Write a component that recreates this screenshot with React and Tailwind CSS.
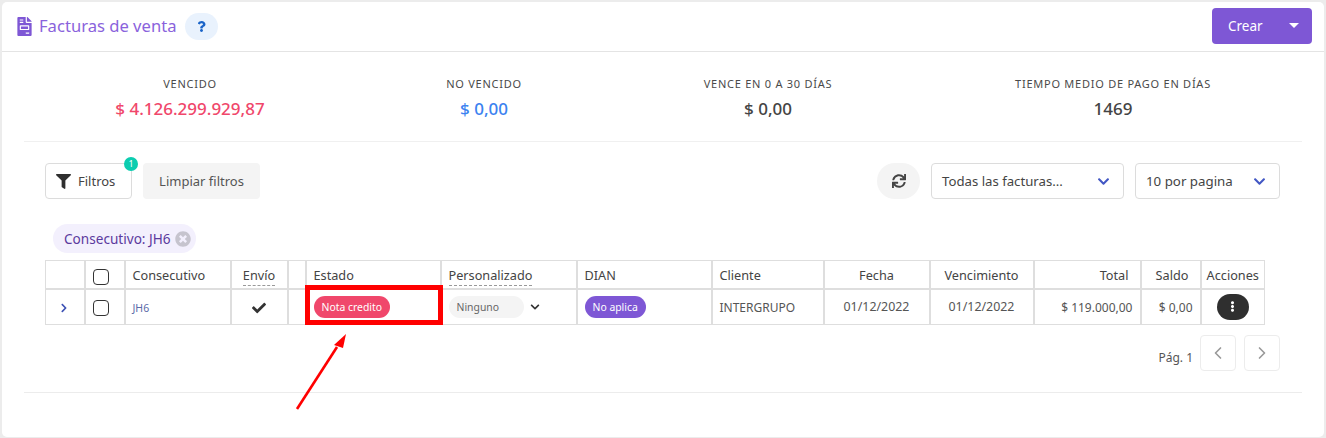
import React from 'react';
import { ChevronLeft, ChevronRight } from 'lucide-react';
import { FaCheck, FaChevronDown, FaChevronRight, FaEllipsisV, FaFileInvoice, FaFilter, FaQuestion, FaSync, FaTimesCircle } from 'react-icons/fa';

const COLS = [39, 40, 106, 57, 18, 135, 136, 135, 112, 106, 104, 107, 60, 64];

const HEADERS = [
  { label: '' },
  { label: '', check: true },
  { label: 'Consecutivo' },
  { label: 'Envío', dashed: true, align: 'text-center' },
  { label: '' },
  { label: 'Estado' },
  { label: 'Personalizado', dashed: true },
  { label: 'DIAN' },
  { label: 'Cliente' },
  { label: 'Fecha', align: 'text-center' },
  { label: 'Vencimiento', align: 'text-center' },
  { label: 'Total', align: 'text-right pr-[11px]' },
  { label: 'Saldo', align: 'text-center pl-[10px]' },
  { label: 'Acciones', align: 'text-center pl-[3px] pr-[3px]' },
];

const CELL = 'border-2 border-t border-b border-[#dedede] first:border-l last:border-r';

function Stat({ label, value, color, className }) {
  return (
    <div className={`flex flex-col items-center ${className}`}>
      <span className="text-[11px] leading-4 tracking-[0.75px] text-[#4a4a4a]">{label}</span>
      <span className={`text-[17px] leading-6 font-medium mt-[5px] ${color}`}>{value}</span>
    </div>
  );
}

function Box() {
  return <span className="block w-4 h-4 ml-[7px] mt-[3px] rounded-[4px] border border-[#333] bg-white" />;
}

export default function App() {
  return (
    <div className="w-[1326px] h-[438px] bg-[#ececec] pt-[2px] pl-[2px] pr-[2px] pb-[1px] overflow-hidden relative text-[#444] font-['Noto_Sans','Open_Sans',sans-serif]">
      <div className="h-full bg-white rounded-[5px] flex flex-col">
        {/* header */}
        <div className="h-[50px] shrink-0 border-b border-[#e4e4e4] flex items-center pl-[15px] pr-[12px]">
          <FaFileInvoice size={19} className="text-[#7e57d5] w-[15px]" />
          <span className="ml-[7px] text-[16.6px] text-[#8a63dc]">Facturas de venta</span>
          <span className="ml-[9px] w-[33px] h-[27px] rounded-full bg-[#e9f2fd] flex items-center justify-center">
            <FaQuestion size={11} className="text-[#1b64c8]" />
          </span>
          <button className="ml-auto mb-[2px] w-[100px] h-[36px] rounded-[4px] bg-[#7e57d5] text-white text-[13.5px] flex items-center pl-[16px] pr-[13px] justify-between">
            <span className="pt-px">Crear</span>
            <span className="w-0 h-0 border-x-[5px] border-x-transparent border-t-[5px] border-t-white" />
          </button>
        </div>

        {/* totals */}
        <div className="mx-[22px] h-[90px] shrink-0 border-b border-[#f0f0f0] flex pt-[24px] items-start">
          <Stat label="VENCIDO" value="$ 4.126.299.929,87" color="text-[#f0476b]" className="w-[332px]" />
          <Stat label="NO VENCIDO" value="$ 0,00" color="text-[#3b82f0]" className="w-[256px]" />
          <Stat label="VENCE EN 0 A 30 DÍAS" value="$ 0,00" color="text-[#444]" className="w-[312px]" />
          <Stat label="TIEMPO MEDIO DE PAGO EN DÍAS" value="1469" color="text-[#444]" className="w-[378px]" />
        </div>

        {/* filters */}
        <div className="shrink-0 flex items-center mt-[21px] pl-[43px] pr-[44px] h-[36px] text-[13px]">
          <button className="relative w-[87px] h-[36px] rounded-[4px] border border-[#dcdcdc] flex items-center pl-[10px] gap-[7px] text-[#444]">
            <FaFilter size={15} className="text-[#2f2f2f]" />
            <span className="pt-px">Filtros</span>
            <span className="absolute -top-[7px] -right-[7px] w-[14px] h-[14px] rounded-full bg-[#0ccdb0] text-white text-[9px] flex items-center justify-center">1</span>
          </button>
          <button className="ml-[11px] w-[117px] h-[36px] rounded-[4px] bg-[#f4f4f4] text-[#555] pt-px">Limpiar filtros</button>
          <button className="ml-auto w-[43px] h-[36px] rounded-full bg-[#f4f4f4] flex items-center justify-center">
            <FaSync size={14} className="text-[#444]" />
          </button>
          <div className="ml-[11px] w-[193px] h-[36px] rounded-[4px] border border-[#dcdcdc] flex items-center justify-between pl-[10px] pr-[13px] text-[13.2px]">
            <span className="pt-px">Todas las facturas...</span>
            <FaChevronDown size={13} className="text-[#4257c4]" />
          </div>
          <div className="ml-[11px] w-[145px] h-[36px] rounded-[4px] border border-[#dcdcdc] flex items-center justify-between pl-[10px] pr-[13px] text-[13.3px]">
            <span className="pt-px">10 por pagina</span>
            <FaChevronDown size={13} className="text-[#4257c4]" />
          </div>
        </div>

        {/* active filter */}
        <div className="shrink-0 mt-[25px] ml-[51px]">
          <span className="inline-flex items-center h-[29px] rounded-full bg-[#f3f0fd] pl-[11px] pr-[5px] text-[13.6px] text-[#5b3a9e]">
            <span className="pt-px">Consecutivo: JH6</span>
            <FaTimesCircle size={16} className="ml-[4px] text-[#c6c4ce]" />
          </span>
        </div>

        {/* table */}
        <table className="mt-[7px] ml-[43px] border-collapse table-fixed w-[1219px] text-[12px] shrink-0">
          <colgroup>
            {COLS.map((w, i) => <col key={i} style={{ width: w }} />)}
          </colgroup>
          <thead>
            <tr className="h-[28px]">
              {HEADERS.map((h, i) => (
                <th key={i} className={`${CELL} border-b-2 px-[7px] pt-[2px] font-normal text-[12.7px] text-[#444] whitespace-nowrap ${h.align || 'text-left'}`}>
                  {h.check ? <div className="-ml-[7px]"><Box /></div> : h.dashed ? <span className="border-b border-dashed border-[#999] pb-px">{h.label}</span> : h.label}
                </th>
              ))}
            </tr>
          </thead>
          <tbody>
            <tr className="h-[36px] text-[#555]">
              <td className={`${CELL} text-center`}>
                <FaChevronRight size={10} className="inline text-[#3c50b4] -ml-[2px]" />
              </td>
              <td className={CELL}><Box /></td>
              <td className={`${CELL} px-[7px] pt-[4px] text-[10.5px] text-[#5a6aa8]`}>JH6</td>
              <td className={`${CELL} text-center`}>
                <FaCheck size={14} className="inline text-[#333]" />
              </td>
              <td className={CELL} />
              <td className={`${CELL} px-[7px]`}>
                <span className="inline-flex items-center h-[22px] px-[8px] pt-[2px] rounded-full bg-[#f0476b] text-white text-[10.4px]">Nota credito</span>
              </td>
              <td className={`${CELL} px-[7px]`}>
                <div className="flex items-center">
                  <span className="inline-flex items-center w-[75px] h-[22px] pl-[8px] pt-[2px] rounded-full bg-[#f4f4f4] text-[#666] text-[10.4px]">Ninguno</span>
                  <FaChevronDown size={10} className="ml-[6px] text-[#333]" />
                </div>
              </td>
              <td className={`${CELL} px-[7px]`}>
                <span className="inline-flex items-center h-[22px] px-[8px] pt-[2px] rounded-full bg-[#7e57d5] text-white text-[10.4px]">No aplica</span>
              </td>
              <td className={`${CELL} px-[7px] pt-[2px]`}>INTERGRUPO</td>
              <td className={`${CELL} text-center pt-[2px] text-[12.4px]`}>01/12/2022</td>
              <td className={`${CELL} text-center pt-[2px] text-[12.4px]`}>01/12/2022</td>
              <td className={`${CELL} px-[7px] pt-[2px] text-right`}>$ 119.000,00</td>
              <td className={`${CELL} px-[7px] pt-[2px] text-right`}>$ 0,00</td>
              <td className={`${CELL} text-center`}>
                <span className="inline-flex w-[32px] h-[26px] rounded-full bg-[#2f2f2f] items-center justify-center align-middle">
                  <FaEllipsisV size={11} className="text-white" />
                </span>
              </td>
            </tr>
          </tbody>
        </table>

        {/* pagination */}
        <div className="shrink-0 flex items-center justify-end mt-[10px] pr-[44px] text-[12px] text-[#555]">
          <span className="mr-[7px] pt-[10px]">Pág. 1</span>
          <span className="w-[36px] h-[36px] rounded-[4px] border border-[#ececec] flex items-center justify-center">
            <ChevronLeft size={20} className="text-[#999]" />
          </span>
          <span className="ml-[8px] w-[36px] h-[36px] rounded-[4px] border border-[#ececec] flex items-center justify-center">
            <ChevronRight size={20} className="text-[#999]" />
          </span>
        </div>

        <div className="mx-[22px] mt-[21px] border-b border-[#ececec]" />
      </div>

      {/* annotation drawn over the screenshot */}
      <div className="absolute left-[305px] top-[285px] w-[138px] h-[40px] border-[5px] border-[#ff0000] pointer-events-none" />
      <svg className="absolute left-[290px] top-[330px] pointer-events-none" width="62" height="84" viewBox="0 0 62 84">
        <path d="M7 79 L47 17" stroke="#ff0000" strokeWidth="2.6" fill="none" />
        <path d="M56 4 L53 18 L44 15 Z" fill="#ff0000" />
      </svg>
    </div>
  );
}
